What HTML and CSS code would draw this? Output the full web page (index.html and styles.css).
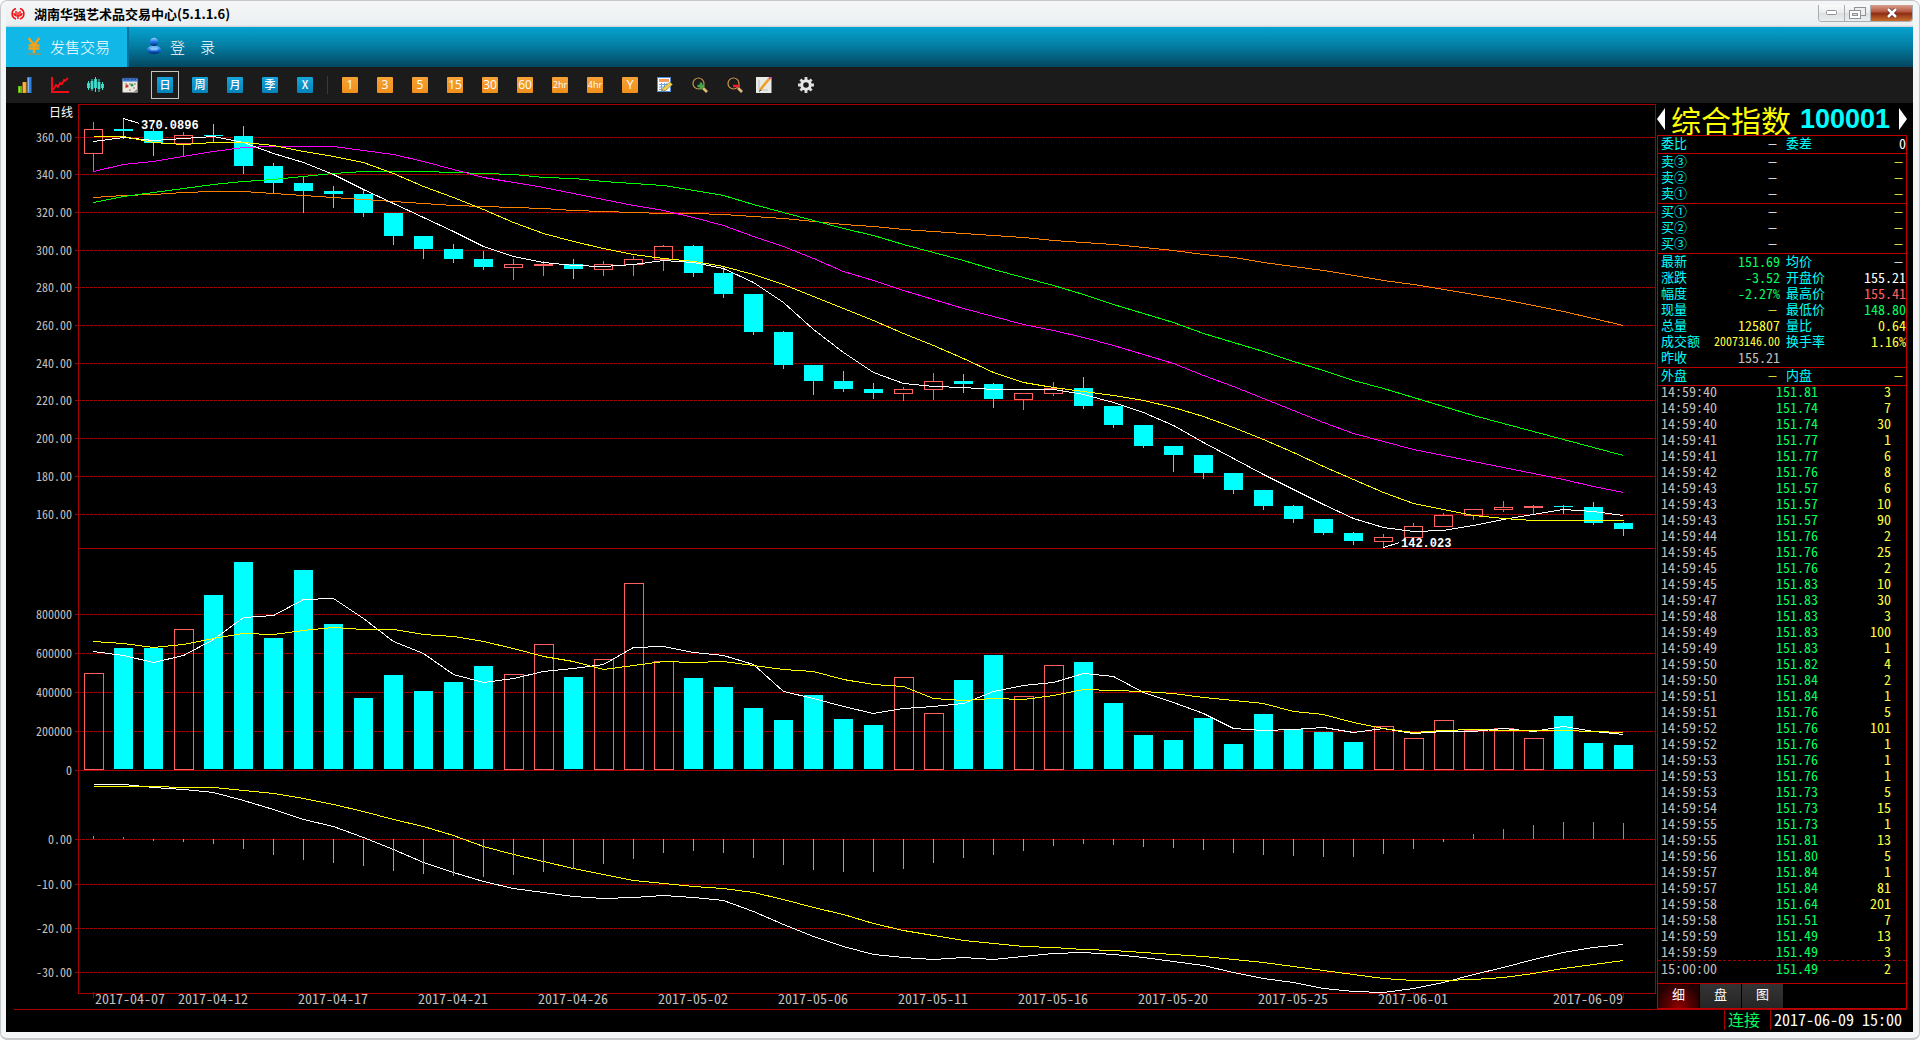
FILE: index.html
```html
<!DOCTYPE html>
<html lang="zh-CN">
    <head>
        <meta charset="utf-8">
        <title>湖南华强艺术品交易中心(5.1.1.6)</title>

        <link rel="stylesheet" href="styles.css">
    </head>

    <body>

        <div class="window">
            <header class="titlebar">
                <svg class="app-icon" width="14" height="12" viewBox="0 0 14 12">
                    <path d="M5 0.5 A5.5 5.5 0 0 0 5 11 M9 0.5 A5.5 5.5 0 0 1 9 11" fill="none" stroke="#f01010" stroke-width="1.6"/>
                    <path d="M5 3v4M9 3v4M7 4v7M3 5c0 2 2 3 4 3s4-1 4-3" fill="none" stroke="#f01010" stroke-width="1.4"/>
                </svg>
                <h1 class="app-title">湖南华强艺术品交易中心(5.1.1.6)</h1>
                <div class="window-buttons">
                    <button class="win-min" aria-label="最小化">
                        <svg width="11" height="6" viewBox="0 0 11 6"><rect x="0.5" y="0.5" width="10" height="4" rx="1" fill="#fff" stroke="#8d9296"/></svg>
                    </button>
                    <button class="win-max" aria-label="还原">
                        <svg width="17" height="12" viewBox="0 0 17 12">
                            <rect x="5.5" y="0.5" width="11" height="8" fill="#eee" stroke="#8d9296"/>
                            <rect x="0.5" y="3.5" width="11" height="8" fill="#fff" stroke="#8d9296"/>
                            <rect x="3.5" y="6.5" width="5" height="2" fill="#ddd" stroke="#8d9296"/>
                        </svg>
                    </button>
                    <button class="win-close" aria-label="关闭">
                        <svg width="12" height="10" viewBox="0 0 12 10"><path d="M2 1l8 8M10 1l-8 8" stroke="#5b2a22" stroke-width="4"/><path d="M2 1l8 8M10 1l-8 8" stroke="#fff" stroke-width="2.6"/></svg>
                    </button>
                </div>
            </header>

            <div class="client">
                <nav class="menubar">
                    <button class="menu-item active">
                        <svg width="16" height="18" viewBox="0 0 16 18">
                            <path d="M2.500 1l5.500 7l5.500-7M8 8v8M2.500 8.500h11M2.500 11.500h11" fill="none" stroke="#f5a11a" stroke-width="2.400"/>
                            <path d="M1 17h14" stroke="#c58a3a" stroke-width="1"/>
                        </svg>
                        发售交易
                    </button>
                    <button class="menu-item">
                        <svg width="16" height="18" viewBox="0 0 16 18">
                            <defs>
                                <linearGradient id="person" x1="0" y1="0" x2="0" y2="1">
                                    <stop offset="0" stop-color="#8fd0ff"/>
                                    <stop offset="0.500" stop-color="#1c74e8"/>
                                    <stop offset="1" stop-color="#03286f"/>
                                </linearGradient>
                            </defs>
                            <path d="M1 14c0-4 3-5 7-5s7 1 7 5c0 4-14 4-14 0z" fill="url(#person)"/>
                            <circle cx="8" cy="5" r="4.200" fill="url(#person)"/>
                            <ellipse cx="8" cy="12" rx="4" ry="1.500" fill="#9fd6ff" opacity="0.700"/>
                        </svg>
                        登　录
                    </button>
                </nav>

                <div class="toolbar">
                    <button class="tool" aria-label="行情">
                        <svg width="16" height="16" viewBox="0 0 16 16">
                            <rect x="1" y="9" width="4" height="7" fill="#5fb80c"/>
                            <rect x="5.500" y="5" width="4" height="11" fill="#f2a21b"/>
                            <rect x="10" y="0" width="4.500" height="16" fill="#2d7fe0"/>
                            <path d="M2.500 10v5M7 6v9M11.500 1v14" stroke="#fff" stroke-opacity="0.450"/>
                        </svg>
                    </button>
                    <button class="tool" aria-label="分时">
                        <svg width="18" height="16" viewBox="0 0 18 16">
                            <path d="M1 0v15h17" fill="none" stroke="#f00c18" stroke-width="2"/>
                            <path d="M2 13l3-5 2 2 2-4 2 1 2-4 1 1 3-3" fill="none" stroke="#f00c18" stroke-width="1.800"/>
                        </svg>
                    </button>
                    <button class="tool" aria-label="K线">
                        <svg width="18" height="16" viewBox="0 0 18 16">
                            <path d="M2.500 4v9M6 2v12M9.500 0v15M13 2v13M16.500 5v8" stroke="#3fe0d0"/>
                            <path d="M2.500 6v5M6 4v8M9.500 2v9M13 5v7M16.500 7v4" stroke="#3fe0d0" stroke-width="2.800"/>
                        </svg>
                    </button>
                    <button class="tool" aria-label="日历">
                        <svg width="16" height="16" viewBox="0 0 16 16">
                            <rect x="0.500" y="2" width="15" height="13.500" fill="#eee9e0"/>
                            <rect x="0.500" y="1" width="15" height="3.500" fill="#3a79cf"/>
                            <path d="M3 0v3M6 0v3M10 0v3M13 0v3" stroke="#223a6a"/>
                            <path d="M3 7h2M7 7h2M12 7h2M3 10h2M11 11h2M7 13h2" stroke="#b9b0a4" stroke-width="2"/>
                            <circle cx="5" cy="9" r="1.600" fill="#d8352a"/>
                            <circle cx="10" cy="8" r="1.600" fill="#3a9a45"/>
                            <path d="M11 15.500l4.500-4v4z" fill="#9a938b"/>
                        </svg>
                    </button>
                    <button class="tool selected"><span class="badge blue">日</span></button>
                    <button class="tool"><span class="badge blue">周</span></button>
                    <button class="tool"><span class="badge blue">月</span></button>
                    <button class="tool"><span class="badge blue">季</span></button>
                    <button class="tool"><span class="badge blue">X</span></button>
                    <span class="separator"></span>
                    <button class="tool"><span class="badge orange">1</span></button>
                    <button class="tool"><span class="badge orange">3</span></button>
                    <button class="tool"><span class="badge orange">5</span></button>
                    <button class="tool"><span class="badge orange">15</span></button>
                    <button class="tool"><span class="badge orange">30</span></button>
                    <button class="tool"><span class="badge orange">60</span></button>
                    <button class="tool"><span class="badge orange narrow">2hr</span></button>
                    <button class="tool"><span class="badge orange narrow">4hr</span></button>
                    <button class="tool"><span class="badge orange">Y</span></button>
                    <button class="tool" aria-label="编辑">
                        <svg width="16" height="16" viewBox="0 0 16 16">
                            <rect x="0.500" y="0.500" width="13" height="14" fill="#fff" stroke="#4d8bd8"/>
                            <rect x="2" y="2" width="10" height="3" fill="#f39a5a"/>
                            <path d="M2 7.500h10M2 10h10M2 12.500h8M4.500 6v8M7.500 6v8M10 6v6" stroke="#6aa3e6"/>
                            <path d="M5 14l1-3 7-6 2.500 2.500-7 6z" fill="#f2cf4a" stroke="#94732a" stroke-width="0.600"/>
                        </svg>
                    </button>
                    <button class="tool" aria-label="放大">
                        <svg width="16" height="16" viewBox="0 0 16 16">
                            <circle cx="6.500" cy="6.500" r="5.500" fill="none" stroke="#c9974a" stroke-width="1.200"/>
                            <path d="M11 11l4 4" stroke="#e0b878" stroke-width="2.600"/>
                            <path d="M9 5.500v7M5.500 9h7" stroke="#3fae48" stroke-width="2.400"/>
                        </svg>
                    </button>
                    <button class="tool" aria-label="缩小">
                        <svg width="16" height="16" viewBox="0 0 16 16">
                            <circle cx="6.500" cy="6.500" r="5.500" fill="none" stroke="#c9974a" stroke-width="1.200"/>
                            <path d="M11 11l4 4" stroke="#e0b878" stroke-width="2.600"/>
                            <path d="M6 9h7" stroke="#f01c2c" stroke-width="2.600"/>
                        </svg>
                    </button>
                    <button class="tool slim" aria-label="画线">
                        <svg width="16" height="16" viewBox="0 0 16 16">
                            <rect x="0" y="0" width="15.500" height="16" fill="#e9e9e6"/>
                            <path d="M3 3v10h9" fill="none" stroke="#bdbdb8"/>
                            <path d="M4 13l9-11" stroke="#f0a020" stroke-width="2.600"/>
                            <path d="M13 2l2-2" stroke="#d0508a" stroke-width="2.400"/>
                            <path d="M3 14.500l2-1.500" stroke="#333"/>
                        </svg>
                    </button>
                    <button class="tool settings" aria-label="设置">
                        <svg width="16" height="16" viewBox="0 0 16 16">
                            <path d="M8 0v16M0 8h16M2.400 2.400l11.200 11.200M13.600 2.400L2.400 13.600" stroke="#dcdcdc" stroke-width="2.800"/>
                            <circle cx="8" cy="8" r="4.300" fill="#1b1b1b" stroke="#e6e6e6" stroke-width="3"/>
                        </svg>
                    </button>
                </div>

                <main class="main">
                    <svg class="chart" id="chart" viewBox="6 103 1650 906"></svg>

                    <aside class="sidebar">
                        <div class="symbol">
                            <button class="arrow" aria-label="上一个"><svg width="8" height="22" viewBox="0 0 8 22"><path d="M8 0v22L0 11z" fill="#fff"/></svg></button>
                            <span class="symbol-name">综合指数</span>
                            <span class="symbol-code">100001</span>
                            <button class="arrow" aria-label="下一个"><svg width="8" height="22" viewBox="0 0 8 22"><path d="M0 0v22l8-11z" fill="#fff"/></svg></button>
                        </div>

                        <div class="quote">
                            <table class="quote-table">
                                <tr><th>委比</th><td class="dash">—</td><th>委差</th><td>0</td></tr>
                            </table>
                            <table class="quote-table">
                                <tr><th>卖③</th><td class="dash">—</td><th></th><td class="dash yellow">—</td></tr>
                                <tr><th>卖②</th><td class="dash">—</td><th></th><td class="dash yellow">—</td></tr>
                                <tr><th>卖①</th><td class="dash">—</td><th></th><td class="dash yellow">—</td></tr>
                            </table>
                            <table class="quote-table">
                                <tr><th>买①</th><td class="dash">—</td><th></th><td class="dash yellow">—</td></tr>
                                <tr><th>买②</th><td class="dash">—</td><th></th><td class="dash yellow">—</td></tr>
                                <tr><th>买③</th><td class="dash">—</td><th></th><td class="dash yellow">—</td></tr>
                            </table>
                            <table class="quote-table">
                                <tr><th>最新</th><td class="green">151.69</td><th>均价</th><td class="dash">—</td></tr>
                                <tr><th>涨跌</th><td class="green">-3.52</td><th>开盘价</th><td>155.21</td></tr>
                                <tr><th>幅度</th><td class="green">-2.27%</td><th>最高价</th><td class="red">155.41</td></tr>
                                <tr><th>现量</th><td class="dash yellow">—</td><th>最低价</th><td class="green">148.80</td></tr>
                                <tr><th>总量</th><td class="yellow">125807</td><th>量比</th><td class="yellow">0.64</td></tr>
                                <tr><th>成交额</th><td class="yellow amount">20073146.00</td><th>换手率</th><td class="yellow">1.16%</td></tr>
                                <tr><th>昨收</th><td class="gray">155.21</td><th></th><td></td></tr>
                            </table>
                            <table class="quote-table">
                                <tr><th>外盘</th><td class="dash yellow">—</td><th>内盘</th><td class="dash yellow">—</td></tr>
                            </table>

                            <div class="ticks">
                                <table class="tick-table">
                                    <tbody id="ticks"></tbody>
                                </table>
                            </div>

                            <div class="tabs">
                                <button class="tab active">细</button>
                                <button class="tab">盘</button>
                                <button class="tab">图</button>
                            </div>
                        </div>
                    </aside>
                </main>

                <footer class="statusbar">
                    <span class="status-item connected">连接</span>
                    <span class="status-item clock">2017-06-09 15:00</span>
                </footer>
            </div>
        </div>

        <script src="chart.js"></script>

    </body>
</html>
```

FILE: styles.css
```css
* {
    box-sizing: border-box;
}

body {
    margin: 0;
    background: #fff;
    font-family: "Noto Sans CJK SC", sans-serif;
}

button {
    margin: 0;
    padding: 0;
    border: 0;
    background: none;
    color: inherit;
    font: inherit;
}

table {
    border-collapse: collapse;
}

/* Window frame */

.window {
    display: flex;
    flex-direction: column;
    height: 100vh;
    padding: 0 6px 6px 5px;
    border: 1px solid #c4c8ca;
    border-width: 1px 1px 2px;
    border-radius: 7px;
    background: #f3f5f6;
    overflow: hidden;
}

.titlebar {
    display: flex;
    align-items: center;
    height: 26px;
    padding-left: 5px;
    background: linear-gradient(#f4f6f7 0, #eceff1 24px, #c9cdd0 26px);
}

.app-icon {
    margin-right: 9px;
}

.app-title {
    flex: 1;
    margin: 0;
    color: #000;
    font-size: 13px;
    line-height: 22px;
    font-weight: bold;
}

.window-buttons {
    display: flex;
    align-self: flex-start;
    height: 17px;
    margin-top: 4px;
    border: 1px solid #a9adb1;
    border-top: 0;
    border-radius: 0 0 4px 4px;
    overflow: hidden;
}

.window-buttons button {
    display: flex;
    align-items: center;
    justify-content: center;
    background: linear-gradient(#fafafa, #e9ebec 50%, #dcdfe1 50%, #ebedee);
}

.window-buttons .win-min,
.window-buttons .win-max {
    width: 26px;
    border-right: 1px solid #a9adb1;
}

.window-buttons .win-close {
    width: 41px;
    background: linear-gradient(#d8a08f, #b5523c 45%, #8c2a15 50%, #c8702c);
}

.client {
    display: flex;
    flex: 1;
    flex-direction: column;
    min-height: 0;
    background: #000;
}

/* Menu */

.menubar {
    display: flex;
    height: 40px;
    background: linear-gradient(#05a3d0, #0480a6 45%, #04465f);
}

.menu-item {
    display: flex;
    align-items: center;
    gap: 8px;
    padding: 0 17px 2px;
    color: #fff;
    font-size: 15px;
    font-weight: 300;
}

.menu-item.active {
    padding: 0 17px 2px 20px;
    border-right: 2px solid #0572a0;
    background: #11b7e6;
}

/* Toolbar */

.toolbar {
    display: flex;
    align-items: center;
    gap: 7px;
    height: 36px;
    padding-left: 5px;
    background: #1b1b1b;
}

.tool {
    display: flex;
    align-items: center;
    justify-content: center;
    width: 28px;
    height: 28px;
}

.tool.selected {
    border: 1px solid #c4c4c4;
}

.tool.slim {
    width: 16px;
}

.tool.settings {
    margin-left: 13px;
}

.badge {
    width: 16px;
    height: 16px;
    border-radius: 1px;
    color: #fff;
    font-size: 11px;
    line-height: 15px;
    font-weight: 500;
    text-align: center;
}

.badge.blue {
    background: linear-gradient(#15a5dc, #0583b8);
}

.badge.orange {
    background: linear-gradient(#f7a136, #f0901c);
    font-family: "Open Sans", sans-serif;
    font-size: 12px;
}

.badge.narrow {
    font-size: 9px;
}

.separator {
    width: 3px;
    height: 18px;
    background: linear-gradient(#3a3a3a, #3a3a3a) center / 1px 100% no-repeat;
}

/* Chart */

.main {
    display: flex;
    flex: 1;
    min-height: 0;
}

.chart {
    flex: 1;
    min-width: 0;
    height: 100%;
    shape-rendering: crispEdges;
}

.frame {
    fill: none;
    stroke: #a80000;
}

.grid {
    fill: none;
    stroke: #a00000;
    stroke-dasharray: 3 1;
}

.up {
    fill: none;
    stroke: #ff6060;
}

.down {
    fill: #0ff;
}

.down-wick {
    stroke: #0ff;
}

.macd-down {
    stroke: #00ff60;
}

.line {
    fill: none;
}

.axis,
.date {
    fill: #c0c0c0;
    font-size: 12px;
    font-feature-settings: "hwid";
}

.axis {
    text-anchor: end;
}

.axis.period {
    fill: #fff;
}

.date {
    font-size: 14px;
    text-anchor: middle;
}

.date.first {
    text-anchor: start;
}

.date.last {
    text-anchor: end;
}

.extreme {
    fill: #fff;
    font-family: "Liberation Mono", monospace;
    font-size: 12px;
    font-weight: bold;
}

/* Sidebar */

.sidebar {
    display: flex;
    flex-direction: column;
    width: 257px;
    padding: 0 6px 0 1px;
}

.symbol {
    display: flex;
    align-items: center;
    gap: 6px;
    height: 32px;
}

.arrow {
    display: flex;
}

.symbol-name {
    color: #ff0;
    font-size: 30px;
    line-height: 28px;
}

.symbol-code {
    margin: 0 3px 0 auto;
    color: #0ff;
    font-family: "Liberation Sans", sans-serif;
    font-size: 27px;
    line-height: 28px;
    font-weight: bold;
}

.quote {
    display: flex;
    flex: 1;
    flex-direction: column;
    border: 1px solid #c00000;
    border-top: 0;
}

.quote-table {
    width: 100%;
    table-layout: fixed;
    border-top: 1px solid #c00000;
    border-bottom: 1px solid #000;
    border-collapse: separate;
    border-spacing: 0;
}

.quote-table th,
.quote-table td {
    height: 16px;
    padding: 0;
    color: #fff;
    font-size: 14px;
    line-height: 14px;
    font-weight: normal;
    text-align: right;
    vertical-align: top;
    white-space: nowrap;
    font-feature-settings: "hwid";
}

.quote-table th {
    width: 56px;
    padding-left: 3px;
    color: #0ff;
    font-size: 13px;
    text-align: left;
}

.quote-table td:nth-child(2) {
    width: 66px;
}

.quote-table th:nth-child(3) {
    padding-left: 6px;
}

.quote-table .dash {
    padding-right: 3px;
    font-size: 10px;
    font-feature-settings: normal;
}

.quote-table .amount {
    padding-right: 2px;
    font-size: 12px;
}

.quote-table .green {
    color: #00ff60;
}

.quote-table .red {
    color: #ff6060;
}

.quote-table .yellow {
    color: #ffff40;
}

.quote-table .gray {
    color: #c0c0c0;
}

.ticks {
    flex: 1;
    min-height: 0;
    border-top: 1px solid #c00000;
}

.tick-table {
    width: 100%;
    margin-top: -2px;
    table-layout: fixed;
    font-size: 14px;
    font-feature-settings: "hwid";
}

.tick-table td {
    height: 16px;
    padding: 0;
    line-height: 14px;
    vertical-align: top;
}

.tick-table tr:last-child td {
    border-top: 1px dashed #a00000;
}

.tick-table .time {
    width: 118px;
    padding-left: 3px;
    color: #c0c0c0;
}

.tick-table .price {
    width: 60px;
    color: #00ff60;
}

.tick-table .volume {
    padding-right: 15px;
    color: #ffff40;
    text-align: right;
}

.tabs {
    display: flex;
    gap: 1px;
    height: 25px;
    border-top: 1px solid #c00000;
}

.tab {
    width: 41px;
    padding-bottom: 4px;
    background: linear-gradient(#343434, #262626);
    color: #fff;
    font-size: 13px;
    line-height: 20px;
}

.tab.active {
    background: radial-gradient(ellipse at 50% 100%, #900000, #200000 80%);
}

/* Status bar */

.statusbar {
    display: flex;
    justify-content: flex-end;
    height: 23px;
    margin: 0 6px 0 8px;
    border-top: 1px solid #a80000;
}

.status-item {
    height: 20px;
    padding: 0 10px 0 3px;
    border-left: 1px solid #a80000;
    color: #fff;
    font-size: 16px;
    line-height: 18px;
    font-feature-settings: "hwid";
}

.status-item.clock {
    padding-right: 5px;
}

.status-item.connected {
    color: #00ff60;
}
```

FILE: chart.js
```js
const SVG_NS = 'http://www.w3.org/2000/svg';
const chart = document.getElementById('chart');

// plot area
const LEFT = 78;
const RIGHT = 1655;
const TOP = 104;
const BOTTOM = 993;
const FIRST = 93;
const STEP = 30;
const ZERO = 839;

// u = up, d = down; high, body top, body bottom, low, volume top
const candles = [
    ['u', 122, 129, 153, 172, 673], ['d', 118, 129, 131, 139, 648], ['d', 128, 131, 143, 156, 648],
    ['u', 132, 135, 143, 157, 629], ['d', 124, 135, 136, 142, 595], ['d', 126, 136, 166, 174, 562],
    ['d', 163, 166, 183, 194, 638], ['d', 177, 183, 191, 213, 570], ['d', 186, 191, 194, 208, 624],
    ['d', 189, 194, 213, 217, 698], ['d', 213, 213, 236, 245, 675], ['d', 236, 236, 249, 259, 691],
    ['d', 244, 249, 259, 263, 682], ['d', 251, 259, 267, 270, 666], ['u', 259, 264, 267, 280, 674],
    ['u', 261, 264, 265, 276, 644], ['d', 259, 264, 269, 279, 677], ['u', 261, 264, 269, 276, 659],
    ['u', 256, 259, 264, 276, 583], ['u', 245, 246, 259, 271, 661], ['d', 245, 246, 273, 277, 678],
    ['d', 267, 273, 294, 298, 687], ['d', 294, 294, 332, 335, 708], ['d', 331, 332, 365, 369, 720],
    ['d', 365, 365, 381, 395, 695], ['d', 371, 381, 389, 392, 719], ['d', 383, 389, 393, 399, 725],
    ['u', 387, 389, 393, 401, 677], ['u', 373, 381, 389, 400, 713], ['d', 374, 381, 384, 393, 680],
    ['d', 383, 384, 399, 408, 655], ['u', 393, 393, 399, 410, 696], ['u', 382, 388, 393, 396, 665],
    ['d', 377, 388, 406, 409, 662], ['d', 406, 406, 425, 428, 703], ['d', 425, 425, 446, 448, 735],
    ['d', 446, 446, 455, 472, 740], ['d', 455, 455, 473, 479, 718], ['d', 473, 473, 490, 494, 744],
    ['d', 490, 490, 506, 510, 714], ['d', 505, 506, 519, 523, 729], ['d', 519, 519, 533, 535, 732],
    ['d', 532, 533, 541, 545, 742], ['u', 534, 537, 541, 547, 726], ['u', 523, 526, 537, 539, 738],
    ['u', 513, 515, 526, 526, 720], ['u', 509, 509, 515, 520, 730], ['u', 501, 507, 509, 512, 728],
    ['u', 505, 506, 507, 514, 738], ['d', 505, 506, 507, 514, 716], ['d', 502, 507, 523, 525, 743],
    ['d', 522, 523, 529, 536, 745]
];

const lines = {
    '#ff8000': [197, 195, 194, 192, 191, 191, 193, 195, 197, 199, 201, 203, 205, 206, 207, 208, 210, 211, 212, 213,
        213, 214, 216, 218, 221, 224, 226, 229, 231, 233, 235, 237, 240, 242, 244, 247, 250, 254, 257, 262,
        266, 270, 275, 280, 284, 289, 294, 299, 305, 311, 318, 325],
    '#00ff00': [202, 196, 192, 188, 184, 181, 179, 176, 173, 171, 171, 171, 172, 173, 174, 177, 178, 181, 183, 185,
        190, 195, 204, 212, 220, 228, 235, 244, 252, 260, 269, 277, 285, 294, 304, 313, 322, 333, 342, 351,
        361, 370, 380, 388, 397, 406, 415, 423, 431, 439, 447, 455],
    '#ff00ff': [171, 164, 161, 156, 151, 147, 146, 146, 146, 150, 154, 161, 169, 177, 182, 187, 193, 199, 205, 210,
        217, 225, 236, 246, 258, 271, 280, 290, 299, 308, 316, 324, 330, 337, 345, 354, 363, 375, 386, 398,
        410, 422, 433, 441, 449, 455, 461, 467, 473, 479, 486, 492],
    '#ffffff': [141, 137, 140, 138, 136, 142, 153, 162, 174, 189, 203, 217, 231, 246, 256, 262, 265, 266, 264, 260,
        262, 268, 282, 302, 329, 352, 372, 383, 386, 387, 389, 389, 389, 394, 402, 412, 425, 442, 458, 474,
        489, 504, 518, 527, 531, 530, 525, 519, 514, 509, 511, 515],
    '#ffff00': [136, 136, 142, 144, 142, 142, 145, 151, 156, 162, 173, 186, 197, 209, 222, 233, 241, 248, 254, 258,
        261, 266, 274, 284, 296, 308, 320, 333, 345, 358, 372, 382, 387, 391, 395, 400, 407, 416, 427, 439,
        452, 466, 479, 492, 503, 509, 515, 518, 520, 520, 520, 520]
};

const volumeLines = {
    '#ffffff': [651, 655, 662, 655, 639, 617, 615, 599, 598, 618, 641, 653, 674, 682, 678, 671, 668, 664, 647, 646,
        652, 655, 664, 691, 698, 706, 713, 708, 706, 703, 691, 685, 682, 673, 676, 692, 702, 713, 728, 730,
        729, 727, 732, 728, 733, 731, 731, 728, 731, 726, 731, 734],
    '#ffff00': [641, 643, 647, 644, 638, 633, 634, 630, 627, 629, 629, 634, 636, 641, 648, 656, 661, 669, 665, 661,
        662, 661, 665, 669, 671, 679, 684, 686, 698, 700, 698, 699, 695, 689, 690, 691, 693, 697, 700, 703,
        711, 714, 722, 728, 732, 730, 729, 730, 730, 730, 731, 732]
};

const macdBars = [836, 837, 841, 842, 844, 849, 855, 860, 863, 866, 871, 874, 876, 877, 875, 872, 869, 864, 859, 853,
    851, 853, 858, 865, 870, 872, 872, 869, 863, 858, 855, 851, 846, 844, 845, 847, 848, 850, 853, 855,
    856, 857, 857, 854, 849, 842, 834, 829, 825, 822, 822, 823];

const macdLines = {
    '#ffffff': [784, 784, 787, 789, 792, 800, 809, 819, 826, 837, 849, 862, 872, 881, 888, 892, 896, 898, 897, 895,
        897, 900, 911, 924, 936, 946, 954, 957, 959, 957, 959, 956, 953, 952, 954, 957, 961, 965, 972, 978,
        982, 988, 991, 992, 988, 982, 974, 967, 959, 952, 947, 944],
    '#ffff00': [786, 786, 786, 787, 787, 790, 793, 798, 804, 811, 819, 826, 835, 846, 854, 861, 868, 874, 880, 883,
        886, 888, 892, 899, 907, 914, 923, 930, 935, 940, 943, 946, 947, 949, 950, 952, 954, 956, 959, 962,
        966, 970, 974, 978, 980, 980, 979, 977, 973, 968, 964, 960]
};

const gridRows = [
    [137, '360.00'], [174, '340.00'], [212, '320.00'], [250, '300.00'], [287, '280.00'], [325, '260.00'],
    [363, '240.00'], [400, '220.00'], [438, '200.00'], [476, '180.00'], [514, '160.00'],
    [614, '800000'], [653, '600000'], [692, '400000'], [731, '200000'],
    [839, '0.00'], [884, '-10.00'], [928, '-20.00'], [972, '-30.00']
];

const dates = [
    [0, '2017-04-07'], [4, '2017-04-12'], [8, '2017-04-17'], [12, '2017-04-21'], [16, '2017-04-26'],
    [20, '2017-05-02'], [24, '2017-05-06'], [28, '2017-05-11'], [32, '2017-05-16'], [36, '2017-05-20'],
    [40, '2017-05-25'], [44, '2017-06-01'], [51, '2017-06-09']
];

function add (name, attrs, text) {
    const el = document.createElementNS(SVG_NS, name);
    for (const key in attrs) {
        el.setAttribute(key, attrs[key]);
    }
    if (text) {
        el.textContent = text;
    }
    chart.appendChild(el);
}

function line (cls, x1, y1, x2, y2) {
    add('path', {class: cls, d: `M${x1} ${y1}L${x2} ${y2}`});
}

function x (i) {
    return FIRST + STEP * i;
}

function drawLines (set) {
    for (const color in set) {
        const points = set[color].map((y, i) => `${x(i) + 0.5},${y + 0.5}`).join(' ');
        add('polyline', {class: 'line', stroke: color, points: points});
    }
}

// Frame and grid

gridRows.forEach(([y, label]) => {
    line('grid', LEFT, y + 0.5, RIGHT, y + 0.5);
    line('frame', LEFT - 3, y + 0.5, LEFT, y + 0.5);
    add('text', {class: 'axis', x: 72, y: y + 5}, label);
});

add('rect', {class: 'frame', x: LEFT + 0.5, y: TOP + 0.5, width: RIGHT - LEFT, height: BOTTOM - TOP});
line('frame', LEFT, 548.5, RIGHT, 548.5);
line('frame', LEFT - 3, 770.5, RIGHT, 770.5);
add('text', {class: 'axis', x: 72, y: 775}, '0');
add('text', {class: 'axis period', x: 73, y: 117}, '日线');

// Candles and volume

candles.forEach(([dir, high, top, bottom, low, volume], i) => {
    const cx = x(i) + 0.5;
    if (dir === 'u') {
        line('up', cx, high, cx, top);
        line('up', cx, bottom, cx, low);
        add('rect', {class: 'up', x: cx - 9, y: top + 0.5, width: 18, height: bottom - top});
        add('rect', {class: 'up', x: cx - 9, y: volume + 0.5, width: 19, height: 769 - volume});
    } else {
        line('down-wick', cx, high, cx, low);
        add('rect', {class: 'down', x: cx - 9.5, y: top, width: 19, height: bottom - top});
        add('rect', {class: 'down', x: cx - 9.5, y: volume, width: 19, height: 769 - volume});
    }
});

drawLines(lines);
drawLines(volumeLines);

// MACD

drawLines(macdLines);
macdBars.forEach((y, i) => {
    line(y < ZERO ? 'up' : 'macd-down', x(i) + 0.5, ZERO, x(i) + 0.5, y);
});

// Dates

dates.forEach(([i, label], n) => {
    line('frame', x(i) + 0.5, 992, x(i) + 0.5, 998);
    if (n === 0) {
        add('text', {class: 'date first', x: x(i) + 2, y: 1004}, label);
    } else if (n === dates.length - 1) {
        add('text', {class: 'date last', x: x(i), y: 1004}, label);
    } else {
        add('text', {class: 'date', x: x(i), y: 1004}, label);
    }
});

// Highest and lowest price

add('path', {class: 'line', stroke: '#fff', d: 'M123.5 118.5L139.5 123.5M1383.5 547.5L1399.5 542.5'});
add('text', {class: 'extreme', x: 141, y: 129}, '370.0896');
add('text', {class: 'extreme', x: 1401, y: 547}, '142.023');

// Tick list

const ticks = [
    ['14:59:40', '151.81', 3], ['14:59:40', '151.74', 7], ['14:59:40', '151.74', 30], ['14:59:41', '151.77', 1],
    ['14:59:41', '151.77', 6], ['14:59:42', '151.76', 8], ['14:59:43', '151.57', 6], ['14:59:43', '151.57', 10],
    ['14:59:43', '151.57', 90], ['14:59:44', '151.76', 2], ['14:59:45', '151.76', 25], ['14:59:45', '151.76', 2],
    ['14:59:45', '151.83', 10], ['14:59:47', '151.83', 30], ['14:59:48', '151.83', 3], ['14:59:49', '151.83', 100],
    ['14:59:49', '151.83', 1], ['14:59:50', '151.82', 4], ['14:59:50', '151.84', 2], ['14:59:51', '151.84', 1],
    ['14:59:51', '151.76', 5], ['14:59:52', '151.76', 101], ['14:59:52', '151.76', 1], ['14:59:53', '151.76', 1],
    ['14:59:53', '151.76', 1], ['14:59:53', '151.73', 5], ['14:59:54', '151.73', 15], ['14:59:55', '151.73', 1],
    ['14:59:55', '151.81', 13], ['14:59:56', '151.80', 5], ['14:59:57', '151.84', 1], ['14:59:57', '151.84', 81],
    ['14:59:58', '151.64', 201], ['14:59:58', '151.51', 7], ['14:59:59', '151.49', 13], ['14:59:59', '151.49', 3],
    ['15:00:00', '151.49', 2]
];

document.getElementById('ticks').innerHTML = ticks.map(([time, price, volume]) =>
    `<tr><td class="time">${time}</td><td class="price">${price}</td><td class="volume">${volume}</td></tr>`
).join('');
```
